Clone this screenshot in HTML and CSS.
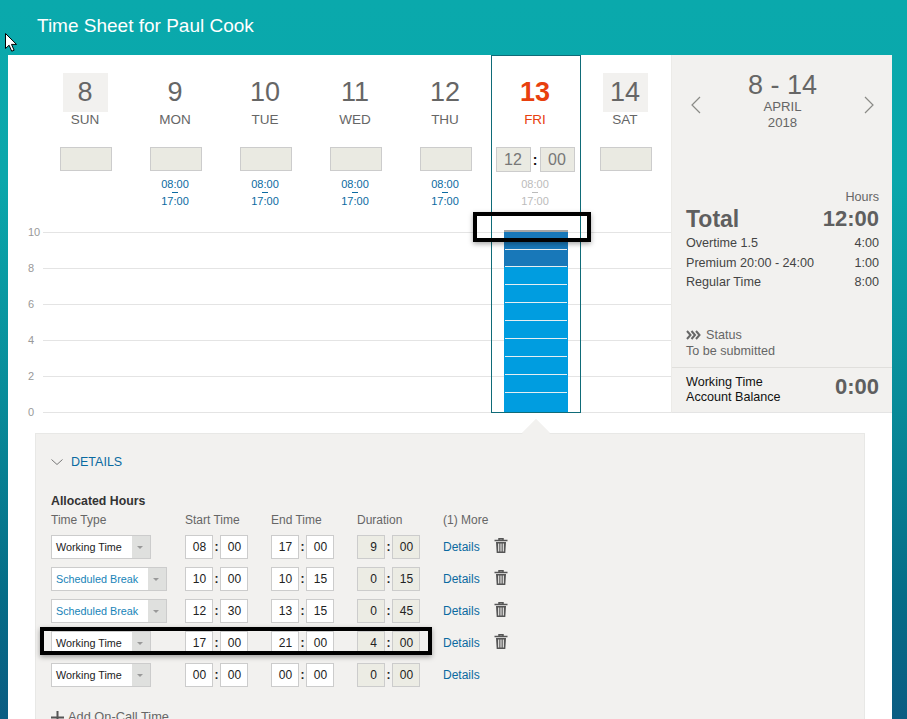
FILE: index.html
```html
<!DOCTYPE html>
<html lang="en">
<head>
<meta charset="utf-8">
<title>Time Sheet</title>
<link rel="stylesheet" href="styles.css">
</head>
<body>
<header class="topbar">Time Sheet for Paul Cook</header>
<svg class="cursor" width="13" height="19" viewBox="0 0 13 19"><path d="M.5.5v15l3.6-3.3 2.6 6 2.4-1-2.6-5.8h5z" fill="#fff" stroke="#000"/></svg>
<main class="card">
  <section class="week">
    <div class="week-main">
      <div class="days">
        <div class="day"><div class="date off">8</div><div class="dow">SUN</div><div class="slot"></div></div>
        <div class="day"><div class="date">9</div><div class="dow">MON</div><div class="slot"></div><div class="shift">08:00<i></i>17:00</div></div>
        <div class="day"><div class="date">10</div><div class="dow">TUE</div><div class="slot"></div><div class="shift">08:00<i></i>17:00</div></div>
        <div class="day"><div class="date">11</div><div class="dow">WED</div><div class="slot"></div><div class="shift">08:00<i></i>17:00</div></div>
        <div class="day"><div class="date">12</div><div class="dow">THU</div><div class="slot"></div><div class="shift">08:00<i></i>17:00</div></div>
        <div class="day current"><div class="date">13</div><div class="dow">FRI</div><div class="slot-pair"><span class="slot-num">12</span><b>:</b><span class="slot-num">00</span></div><div class="shift">08:00<i></i>17:00</div></div>
        <div class="day"><div class="date off">14</div><div class="dow">SAT</div><div class="slot"></div></div>
      </div>
      <div class="chart">
        <div class="tick"><span>10</span><i></i></div>
        <div class="tick"><span>8</span><i></i></div>
        <div class="tick"><span>6</span><i></i></div>
        <div class="tick"><span>4</span><i></i></div>
        <div class="tick"><span>2</span><i></i></div>
        <div class="tick last"><span>0</span><i></i></div>
        <div class="bar">
          <div class="seg dark"></div><div class="seg dark"></div>
          <div class="seg"></div><div class="seg"></div><div class="seg"></div><div class="seg"></div><div class="seg"></div><div class="seg"></div><div class="seg"></div><div class="seg"></div>
        </div>
      </div>
      <div class="day-outline"></div>
    </div>
    <aside class="summary">
      <div class="range">
        <svg class="chev" width="10" height="18" viewBox="0 0 10 18"><path d="M9 1 1 9l8 8" fill="none" stroke="#8a8a86" stroke-width="1.2"/></svg>
        <div class="range-text"><div class="range-days">8 - 14</div><div>APRIL</div><div>2018</div></div>
        <svg class="chev" width="10" height="18" viewBox="0 0 10 18"><path d="m1 1 8 8-8 8" fill="none" stroke="#8a8a86" stroke-width="1.2"/></svg>
      </div>
      <div class="totals">
        <div class="hours">Hours</div>
        <div class="line total"><span class="total-label">Total</span><span>12:00</span></div>
        <div class="line"><span>Overtime 1.5</span><span>4:00</span></div>
        <div class="line"><span>Premium 20:00 - 24:00</span><span>1:00</span></div>
        <div class="line"><span>Regular Time</span><span>8:00</span></div>
      </div>
      <div class="status">
        <div class="status-head"><svg width="15" height="10" viewBox="0 0 15 10"><path d="m1 1 3.500 4L1 9m4.500-8L9 5 5.500 9M10 1l3.500 4L10 9" fill="none" stroke="#666" stroke-width="2"/></svg>Status</div>
        <div>To be submitted</div>
      </div>
      <div class="balance"><div>Working Time<br>Account Balance</div><strong>0:00</strong></div>
    </aside>
  </section>
  <section class="details">
    <div class="notch"></div>
    <div class="details-head"><svg width="12" height="6" viewBox="0 0 12 6"><path d="m.5.500 5.500 5 5.500-5" fill="none" stroke="#777" stroke-width="1"/></svg>DETAILS</div>
    <h2 class="alloc">Allocated Hours</h2>
    <div class="grid">
      <div class="th">Time Type</div><div class="th">Start Time</div><div class="th">End Time</div><div class="th">Duration</div><div class="th">(1) More</div>

      <div class="sel"><span class="sel-text">Working Time</span><span class="sel-btn"></span></div>
      <div class="pair"><span class="num">08</span><b>:</b><span class="num">00</span></div>
      <div class="pair"><span class="num">17</span><b>:</b><span class="num">00</span></div>
      <div class="pair ro"><span class="num">9</span><b>:</b><span class="num">00</span></div>
      <div class="more"><a>Details</a><svg class="trash" width="14" height="16" viewBox="0 0 14 16"><path d="M5 2V.8h4V2M.5 2.500h13" fill="none" stroke="#555" stroke-width="1.500"/><path d="M2 4h10l-.7 11H2.700z" fill="#555"/><path d="M4.700 5.500v8m2.300-8v8m2.300-8v8" stroke="#f2f1ef" stroke-width="1.100"/></svg></div>

      <div class="sel brk"><span class="sel-text">Scheduled Break</span><span class="sel-btn"></span></div>
      <div class="pair"><span class="num">10</span><b>:</b><span class="num">00</span></div>
      <div class="pair"><span class="num">10</span><b>:</b><span class="num">15</span></div>
      <div class="pair ro"><span class="num">0</span><b>:</b><span class="num">15</span></div>
      <div class="more"><a>Details</a><svg class="trash" width="14" height="16" viewBox="0 0 14 16"><path d="M5 2V.8h4V2M.5 2.500h13" fill="none" stroke="#555" stroke-width="1.500"/><path d="M2 4h10l-.7 11H2.700z" fill="#555"/><path d="M4.700 5.500v8m2.300-8v8m2.300-8v8" stroke="#f2f1ef" stroke-width="1.100"/></svg></div>

      <div class="sel brk"><span class="sel-text">Scheduled Break</span><span class="sel-btn"></span></div>
      <div class="pair"><span class="num">12</span><b>:</b><span class="num">30</span></div>
      <div class="pair"><span class="num">13</span><b>:</b><span class="num">15</span></div>
      <div class="pair ro"><span class="num">0</span><b>:</b><span class="num">45</span></div>
      <div class="more"><a>Details</a><svg class="trash" width="14" height="16" viewBox="0 0 14 16"><path d="M5 2V.8h4V2M.5 2.500h13" fill="none" stroke="#555" stroke-width="1.500"/><path d="M2 4h10l-.7 11H2.700z" fill="#555"/><path d="M4.700 5.500v8m2.300-8v8m2.300-8v8" stroke="#f2f1ef" stroke-width="1.100"/></svg></div>

      <div class="sel"><span class="sel-text">Working Time</span><span class="sel-btn"></span></div>
      <div class="pair"><span class="num">17</span><b>:</b><span class="num">00</span></div>
      <div class="pair"><span class="num">21</span><b>:</b><span class="num">00</span></div>
      <div class="pair ro"><span class="num">4</span><b>:</b><span class="num">00</span></div>
      <div class="more"><a>Details</a><svg class="trash" width="14" height="16" viewBox="0 0 14 16"><path d="M5 2V.8h4V2M.5 2.500h13" fill="none" stroke="#555" stroke-width="1.500"/><path d="M2 4h10l-.7 11H2.700z" fill="#555"/><path d="M4.700 5.500v8m2.300-8v8m2.300-8v8" stroke="#f2f1ef" stroke-width="1.100"/></svg></div>

      <div class="sel"><span class="sel-text">Working Time</span><span class="sel-btn"></span></div>
      <div class="pair"><span class="num">00</span><b>:</b><span class="num">00</span></div>
      <div class="pair"><span class="num">00</span><b>:</b><span class="num">00</span></div>
      <div class="pair ro"><span class="num">0</span><b>:</b><span class="num">00</span></div>
      <div class="more"><a>Details</a></div>
    </div>
    <div class="add"><svg width="13" height="13" viewBox="0 0 13 13"><path d="M6.500 0v13M0 6.500h13" stroke="#555" stroke-width="2"/></svg>Add On-Call Time</div>
  </section>
</main>
<div class="callout callout-bar"></div>
<div class="callout callout-row"></div>
</body>
</html>
```
FILE: styles.css
```css
* { box-sizing: border-box; }
html, body { height: 100%; }
body {
  margin: 0;
  height: 719px;
  overflow: hidden;
  position: relative;
  font-family: "Liberation Sans", Arial, sans-serif;
  color: #666;
  background: linear-gradient(#0aa9ac 0, #0aa7ab 25%, #088b99 56%, #056c87 83%, #0b5c82 100%);
}
.topbar {
  height: 55px;
  padding: 15px 0 0 37px;
  color: #fff;
  font-size: 19px;
  line-height: 22px;
}
.cursor { position: absolute; left: 5px; top: 33px; }
.card {
  margin: 0 15px 0 8px;
  height: 664px;
  background: #fff;
  overflow: hidden;
}
.week { display: flex; height: 358px; }
.week-main { position: relative; flex: 1; padding-top: 18px; }
.days { display: grid; grid-template-columns: repeat(7, 90px); margin-left: 32px; height: 159px; }
.day { display: flex; flex-direction: column; align-items: center; }
.date {
  width: 45px;
  height: 39px;
  font-size: 27px;
  line-height: 38px;
  text-align: center;
  color: #666;
}
.date.off { background: #f2f1ef; }
.dow { font-size: 13.500px; line-height: 16px; color: #666; }
.slot {
  width: 52px;
  height: 24px;
  margin: 19px 0 0 1px;
  background: #eaeae2;
  border: 1px solid #ccc;
}
.slot-pair { display: flex; align-items: center; margin-top: 19px; height: 25px; color: #111; }
.slot-pair b { width: 9px; text-align: center; font-size: 14px; }
.slot-num {
  width: 35px;
  height: 25px;
  background: #eaeae2;
  border: 1px solid #ccc;
  text-align: center;
  font-size: 16px;
  line-height: 23px;
  color: #777;
}
.shift {
  margin-top: 5px;
  font-size: 11px;
  line-height: 17px;
  color: #0a6aa1;
  text-align: center;
}
.shift i {
  display: block;
  width: 6px;
  height: 1px;
  margin: -1px auto 0;
  background: currentColor;
}
.current .date { font-weight: 700; color: #e8400e; }
.current .dow { color: #e8400e; }
.current .shift { color: #bbb; margin-top: 4px; }
.chart { position: relative; margin-left: 20px; }
.tick { display: flex; height: 36px; align-items: flex-start; }
.tick.last { height: 1px; }
.tick span {
  width: 15px;
  margin-top: -6px;
  font-size: 11px;
  line-height: 12px;
  color: #999;
}
.tick i { flex: 1; height: 1px; background: #e4e4e4; }
.bar {
  position: absolute;
  left: 476px;
  top: -2px;
  width: 64px;
  height: 182px;
  border-top: 2px solid #a5a5a5;
  display: flex;
  flex-direction: column;
}
.seg { height: 18px; background: #009de0; position: relative; }
.seg.dark { background: #1878b9; height: 17.500px; }
.seg:not(:last-child)::after {
  content: "";
  position: absolute;
  left: 1px;
  right: 1px;
  bottom: 0;
  height: 1px;
  background: #e6eef2;
}
.bar .seg:last-child { flex: 1; }
.day-outline {
  position: absolute;
  left: 483px;
  top: 0;
  width: 90px;
  height: 358px;
  border: 1px solid #0f6b78;
}
.summary {
  width: 221px;
  display: flex;
  flex-direction: column;
  background: #f2f1ef;
  border-bottom: 1px solid #e4e4e4;
  border-left: 1px solid #ecebe8;
  padding-top: 12px;
}
.range {
  display: flex;
  justify-content: space-between;
  align-items: center;
  padding: 0 18px 0 19px;
  height: 66px;
}
.range-text { align-self: flex-start; margin-top: 1px; text-align: center; font-size: 13.200px; line-height: 16px; color: #666; }
.range-days { font-size: 27px; line-height: 34px; margin-bottom: -3px; }
.chev { margin-top: 10px; }
.totals { margin-top: 57px; padding: 0 13px 0 14px; font-size: 12.600px; color: #444; }
.hours { text-align: right; color: #666; line-height: 14px; }
.line { display: flex; justify-content: space-between; line-height: 19.500px; }
.total {
  font-size: 22px;
  font-weight: 700;
  line-height: 26px;
  color: #5f5f5f;
  margin: 2px 0 2px;
}
.total-label { font-size: 23px; }
.status { margin-top: 34px; padding-left: 14px; font-size: 12.600px; line-height: 16px; color: #666; }
.status-head svg { margin-right: 5px; vertical-align: -1px; }
.balance {
  margin-top: 8px;
  border-top: 1px solid #e0dfdc;
  padding: 7px 13px 0 14px;
  flex: 1;
  display: flex;
  justify-content: space-between;
  align-items: flex-start;
  font-size: 12.600px;
  line-height: 15px;
  color: #111;
}
.balance strong { font-size: 22px; line-height: 26px; margin-top: -1px; color: #5f5f5f; }
.details {
  position: relative;
  margin: 20px 27px 0 27px;
  padding: 20px 16px 0 15px;
  height: 300px;
  background: #f2f1ef;
  border: 1px solid #e8e8e6;
}
.notch {
  position: absolute;
  left: 490px;
  top: -11px;
  width: 20px;
  height: 20px;
  background: #f2f1ef;
  transform: rotate(45deg);
}
.details-head {
  position: relative;
  display: flex;
  align-items: center;
  gap: 8px;
  font-size: 12.500px;
  line-height: 16px;
  color: #0a6aa1;
}
.alloc { margin: 23px 0 0; font-size: 12.300px; line-height: 16px; color: #333; font-weight: 700; }
.grid { display: grid; grid-template-columns: 134px 86px 86px 86px 1fr; row-gap: 8px; margin-top: 3px; }
.th { font-size: 12px; line-height: 16px; color: #666; margin-bottom: -1px; }
.sel { display: flex; width: 100px; height: 24px; background: #fff; border: 1px solid #ccc; }
.sel.brk { width: 116px; }
.sel-text { flex: 1; padding-left: 4px; font-size: 10.800px; line-height: 22px; color: #222; white-space: nowrap; }
.brk .sel-text { color: #1784b8; }
.sel-btn { position: relative; width: 18px; background: #dfe0de; }
.sel-btn::after {
  content: "";
  position: absolute;
  left: 5px;
  top: 10px;
  border: 3.500px solid transparent;
  border-top: 3.500px solid #999;
  border-bottom: 0;
}
.pair { display: flex; align-items: center; height: 24px; color: #222; }
.pair b { width: 7px; text-align: center; font-size: 12px; }
.num {
  width: 28px;
  height: 24px;
  padding-left: 1px;
  background: #fff;
  border: 1px solid #ccc;
  text-align: center;
  font-size: 12px;
  line-height: 22px;
}
.ro .num { background: #ecece4; }
.ro .num:first-child { text-align: right; padding-right: 7px; }
.more { display: flex; align-items: center; gap: 15px; height: 24px; }
.more a { font-size: 12px; color: #0a6aa1; }
.trash { margin-top: -3px; margin-left: -1px; }
.add {
  margin-top: 22px;
  display: flex;
  align-items: center;
  gap: 4px;
  font-size: 12.800px;
  line-height: 16px;
  color: #666;
}
.callout {
  position: absolute;
  border: 4px solid #000;
  box-shadow: 0 2px 5px rgba(0, 0, 0, .35);
}
.callout-bar { left: 473px; top: 212px; width: 118px; height: 30px; }
.callout-row { left: 40px; top: 627px; width: 392px; height: 28px; }
```
